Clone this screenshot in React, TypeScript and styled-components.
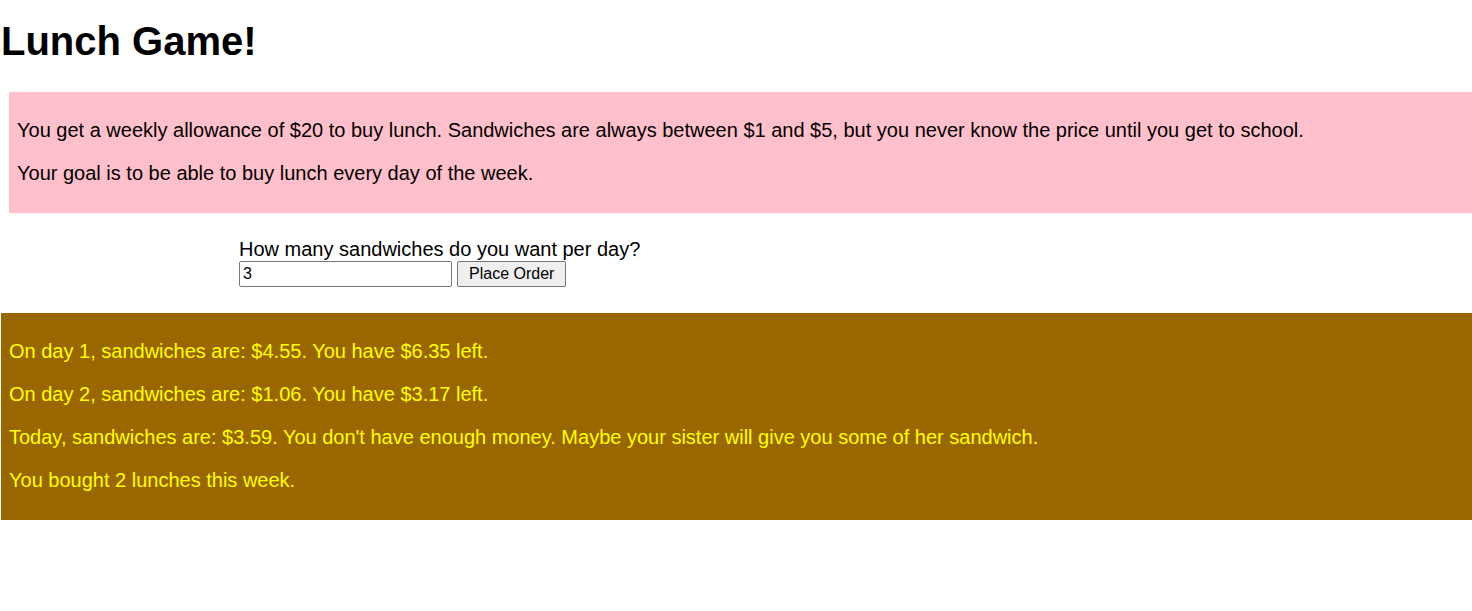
import React from "react";
import styled, { createGlobalStyle } from "styled-components";

const Global = createGlobalStyle`
  html, body {
    margin: 0;
    padding: 0;
    background: #ffffff;
  }
  body {
    font-family: "Liberation Sans", Arial, sans-serif;
    color: #000000;
  }
`;

const Page = styled.div`
  padding-left: 1px;
  display: flex;
  flex-direction: column;
`;

const Title = styled.h1`
  margin: 18px 0 28px 0;
  font-size: 40px;
  line-height: 46px;
  font-weight: 700;
`;

const Panel = styled.div<{ $bg: string; $fg: string; $inset: number }>`
  margin-left: ${(p) => p.$inset}px;
  padding: 7px 8px 8px 8px;
  background: ${(p) => p.$bg};
  color: ${(p) => p.$fg};
`;

const Para = styled.p`
  margin: 20px 0;
  font-size: 20px;
  line-height: 23px;
`;

const OrderForm = styled.form`
  margin: 24px 0 26px 237px;
  display: flex;
  flex-direction: column;
`;

const Label = styled.label`
  font-size: 20px;
  line-height: 23px;
  padding-left: 1px;
  padding-top: 1px;
`;

const Row = styled.div`
  margin-top: 0;
  margin-left: 1px;
  display: flex;
  align-items: center;
  gap: 5px;
  height: 26px;
`;

const NumberInput = styled.input`
  box-sizing: border-box;
  width: 213px;
  height: 26px;
  margin: 0;
  padding: 0 3px;
  border: 1px solid #767676;
  border-radius: 2px;
  font-family: "Liberation Sans", Arial, sans-serif;
  font-size: 16px;
  color: #000;
  background: #fff;
  outline: none;
`;

const OrderButton = styled.button`
  box-sizing: border-box;
  height: 26px;
  margin: 0;
  padding: 0 11px;
  border: 1px solid #767676;
  border-radius: 2px;
  background: #efefef;
  font-family: "Liberation Sans", Arial, sans-serif;
  font-size: 16px;
  color: #000;
`;

const results = [
  "On day 1, sandwiches are: $4.55. You have $6.35 left.",
  "On day 2, sandwiches are: $1.06. You have $3.17 left.",
  "Today, sandwiches are: $3.59. You don't have enough money. Maybe your sister will give you some of her sandwich.",
  "You bought 2 lunches this week.",
];

export default function App() {
  return (
    <Page>
      <Global />
      <Title>Lunch Game!</Title>
      <Panel $bg="#ffc0cb" $fg="#000000" $inset={8}>
        <Para>
          You get a weekly allowance of $20 to buy lunch. Sandwiches are always between $1 and $5, but you never know the price until you get to school.
        </Para>
        <Para>Your goal is to be able to buy lunch every day of the week.</Para>
      </Panel>
      <OrderForm onSubmit={(e) => e.preventDefault()}>
        <Label htmlFor="count">How many sandwiches do you want per day?</Label>
        <Row>
          <NumberInput id="count" type="text" defaultValue="3" />
          <OrderButton type="submit">Place Order</OrderButton>
        </Row>
      </OrderForm>
      <Panel $bg="#996600" $fg="#ffff00" $inset={0}>
        {results.map((r) => (
          <Para key={r}>{r}</Para>
        ))}
      </Panel>
    </Page>
  );
}
